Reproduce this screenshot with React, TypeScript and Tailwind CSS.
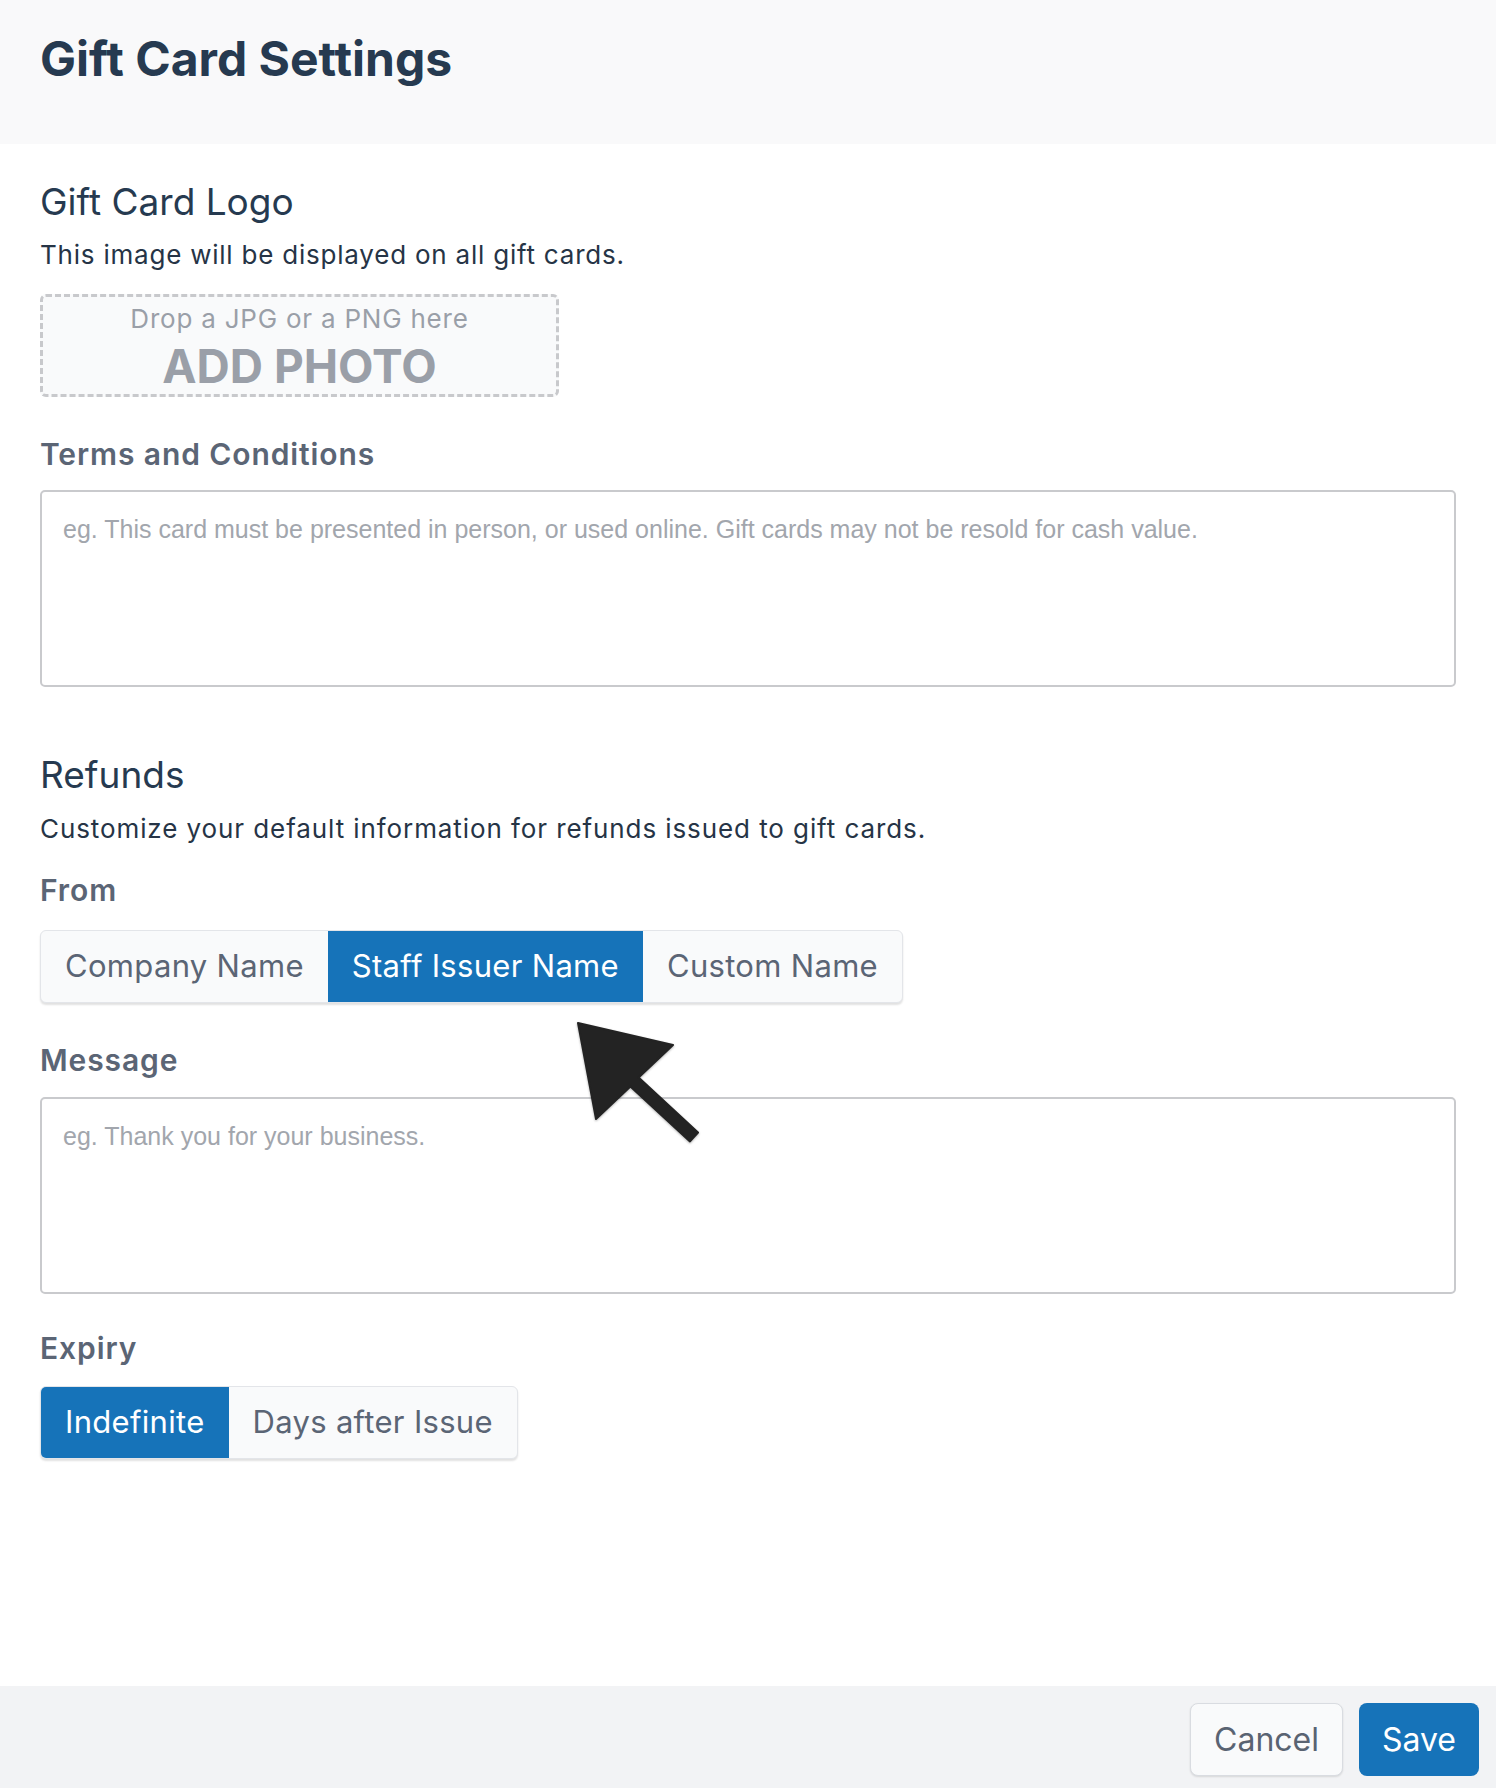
import React from 'react'

const ui = { fontFamily: 'Inter, "Noto Sans", sans-serif' }
const ph = { fontFamily: '"Liberation Sans", Arial, sans-serif' }

function Segmented({ options, selected }: { options: string[]; selected: string }) {
  return (
    <div className="inline-flex h-[73px] rounded-md border border-[#e3e5e9] bg-[#f9fafb] shadow-[0_2px_2px_rgba(0,0,0,0.12)] overflow-hidden">
      {options.map((o) => (
        <button
          key={o}
          className={
            o === selected
              ? 'h-full px-[24px] text-[31px] tracking-[0.01em] bg-[#1673b9] text-white'
              : 'h-full px-[24px] text-[31px] tracking-[0.01em] text-[#5b6575]'
          }
        >
          {o}
        </button>
      ))}
    </div>
  )
}

function Label({ children }: { children: React.ReactNode }) {
  return <div className="text-[30px] leading-[36px] font-semibold tracking-[0.03em] text-[#5b6575]">{children}</div>
}

function Area({ placeholder }: { placeholder: string }) {
  return (
    <textarea
      readOnly
      placeholder={placeholder}
      style={ph}
      className="block w-full h-[197px] resize-none rounded-[5px] border-2 border-[#c9cacd] px-[21px] pt-[22px] text-[25px] leading-[30px] placeholder:text-[#a2a6ad] outline-none"
    />
  )
}

export default function App() {
  return (
    <div style={ui} className="relative min-h-[1788px] flex flex-col bg-white text-[#2d3748]">
      <header className="h-[144px] bg-[#f9f9fa] px-[40px] pt-[31px]">
        <h1 className="text-[48px] leading-[56px] font-bold text-[#263a50]">
          Gift Card Settings
        </h1>
      </header>

      <main className="flex-1 px-[40px] pt-[36px]">
        <h2 className="text-[37px] leading-[44px] text-[#263a50]">Gift Card Logo</h2>
        <p className="mt-[15px] text-[26px] leading-[32px] tracking-[0.03em] text-[#263446]">
          This image will be displayed on all gift cards.
        </p>
        <div className="mt-[23px] w-[519px] h-[103px] rounded-md border-[3px] border-dashed border-[#c8c9cc] bg-[#f9fafb] flex flex-col items-center pt-[6px]">
          <div className="text-[26px] leading-[32px] tracking-[0.03em] text-[#9a9fa8]">Drop a JPG or a PNG here</div>
          <div className="text-[46px] leading-[50px] font-bold text-[#9a9fa8] mt-[6px]">ADD PHOTO</div>
        </div>

        <div className="mt-[39px]">
          <Label>Terms and Conditions</Label>
        </div>
        <div className="mt-[18px]">
          <Area placeholder="eg. This card must be presented in person, or used online. Gift cards may not be resold for cash value." />
        </div>

        <h2 className="mt-[66px] text-[37px] leading-[44px] text-[#263a50]">Refunds</h2>
        <p className="mt-[16px] text-[26px] leading-[32px] tracking-[0.035em] text-[#263446]">
          Customize your default information for refunds issued to gift cards.
        </p>
        <div className="mt-[27px]">
          <Label>From</Label>
        </div>
        <div className="mt-[22px]">
          <Segmented options={['Company Name', 'Staff Issuer Name', 'Custom Name']} selected="Staff Issuer Name" />
        </div>

        <div className="mt-[39px]">
          <Label>Message</Label>
        </div>
        <div className="mt-[19px]">
          <Area placeholder="eg. Thank you for your business." />
        </div>

        <div className="mt-[36px]">
          <Label>Expiry</Label>
        </div>
        <div className="mt-[20px]">
          <Segmented options={['Indefinite', 'Days after Issue']} selected="Indefinite" />
        </div>
      </main>

      <footer className="h-[102px] bg-[#f2f3f5] flex justify-end items-start gap-[16px] pt-[17px] pr-[17px]">
        <button className="w-[153px] h-[73px] rounded-lg border border-[#d9dce1] bg-[#f9fafb] shadow-[0_1px_2px_rgba(0,0,0,0.12)] text-[32px] text-[#596372]">
          Cancel
        </button>
        <button className="w-[120px] h-[73px] rounded-lg bg-[#1673b9] text-[32px] text-white">
          Save
        </button>
      </footer>

      {/* annotation cursor */}
      <svg className="absolute left-[570px] top-[1015px] drop-shadow-[0_1px_1px_rgba(0,0,0,0.3)]" width="136" height="134" viewBox="0 0 136 134">
        <polygon
          points="8,8 103,30 68.6,62.6 128,117.6 120,126.4 60.4,71.4 26,104"
          fill="#232323"
          strokeLinejoin="round"
          stroke="#232323"
          strokeWidth="2"
        />
      </svg>
    </div>
  )
}
